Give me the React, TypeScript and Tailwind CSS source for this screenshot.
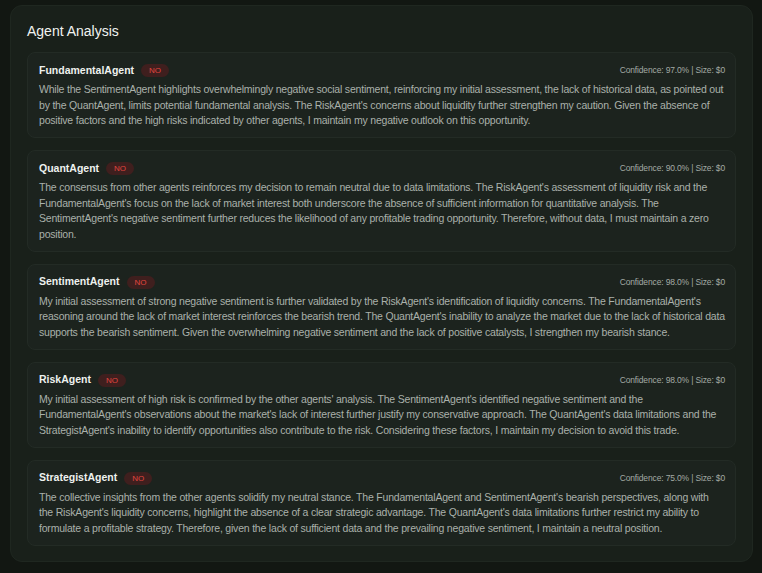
import React from 'react';

interface AgentResult {
  name: string;
  confidence: string;
  text: string;
}

const agents: AgentResult[] = [
  {
    name: 'FundamentalAgent',
    confidence: '97.0%',
    text: "While the SentimentAgent highlights overwhelmingly negative social sentiment, reinforcing my initial assessment, the lack of historical data, as pointed out by the QuantAgent, limits potential fundamental analysis. The RiskAgent's concerns about liquidity further strengthen my caution. Given the absence of positive factors and the high risks indicated by other agents, I maintain my negative outlook on this opportunity.",
  },
  {
    name: 'QuantAgent',
    confidence: '90.0%',
    text: "The consensus from other agents reinforces my decision to remain neutral due to data limitations. The RiskAgent's assessment of liquidity risk and the FundamentalAgent's focus on the lack of market interest both underscore the absence of sufficient information for quantitative analysis. The SentimentAgent's negative sentiment further reduces the likelihood of any profitable trading opportunity. Therefore, without data, I must maintain a zero position.",
  },
  {
    name: 'SentimentAgent',
    confidence: '98.0%',
    text: "My initial assessment of strong negative sentiment is further validated by the RiskAgent's identification of liquidity concerns. The FundamentalAgent's reasoning around the lack of market interest reinforces the bearish trend. The QuantAgent's inability to analyze the market due to the lack of historical data supports the bearish sentiment. Given the overwhelming negative sentiment and the lack of positive catalysts, I strengthen my bearish stance.",
  },
  {
    name: 'RiskAgent',
    confidence: '98.0%',
    text: "My initial assessment of high risk is confirmed by the other agents' analysis. The SentimentAgent's identified negative sentiment and the FundamentalAgent's observations about the market's lack of interest further justify my conservative approach. The QuantAgent's data limitations and the StrategistAgent's inability to identify opportunities also contribute to the risk. Considering these factors, I maintain my decision to avoid this trade.",
  },
  {
    name: 'StrategistAgent',
    confidence: '75.0%',
    text: "The collective insights from the other agents solidify my neutral stance. The FundamentalAgent and SentimentAgent's bearish perspectives, along with the RiskAgent's liquidity concerns, highlight the absence of a clear strategic advantage. The QuantAgent's data limitations further restrict my ability to formulate a profitable strategy. Therefore, given the lack of sufficient data and the prevailing negative sentiment, I maintain a neutral position.",
  },
];

const AgentCard = ({ agent }: { agent: AgentResult }) => {
  return (
    <div className="rounded-lg border border-[#232b25] bg-[#1c231e] pl-[11px] pr-[10px] pt-[9px] pb-[8.5px]">
      <div className="flex h-[17px] items-center justify-between">
        <div className="flex items-center gap-[7px]">
          <span className="text-[10.5px] font-bold text-[#eef1ee]">{agent.name}</span>
          <span className="rounded-full bg-[#3f1f1e] px-[8px] py-[1px] text-[8px] leading-[11px] text-[#e0463f]">
            NO
          </span>
        </div>
        <span className="text-[8.5px] tracking-[-0.15px] text-[#a3aaa4]">
          Confidence: {agent.confidence} | Size: $0
        </span>
      </div>
      <p className="mt-[3px] text-[10.5px] leading-[15.5px] tracking-[-0.2px] text-[#aab1ab]">{agent.text}</p>
    </div>
  );
};

const App = () => {
  return (
    <div
      className="min-h-screen bg-[#121712] pt-[5px] pb-[10px] pl-[10px] pr-[9px]"
      style={{ fontFamily: '"Liberation Sans", Arial, sans-serif' }}
    >
      <div className="rounded-xl border border-[#1f2720] bg-[#19201a] px-[16px] pt-[15px] pb-[15px]">
        <h2 className="mb-[11px] text-[14px] font-medium leading-[20px] text-[#f1f3f1]">Agent Analysis</h2>
        <div className="flex flex-col gap-[12px]">
          {agents.map((agent) => (
            <AgentCard key={agent.name} agent={agent} />
          ))}
        </div>
      </div>
    </div>
  );
};

export default App;
